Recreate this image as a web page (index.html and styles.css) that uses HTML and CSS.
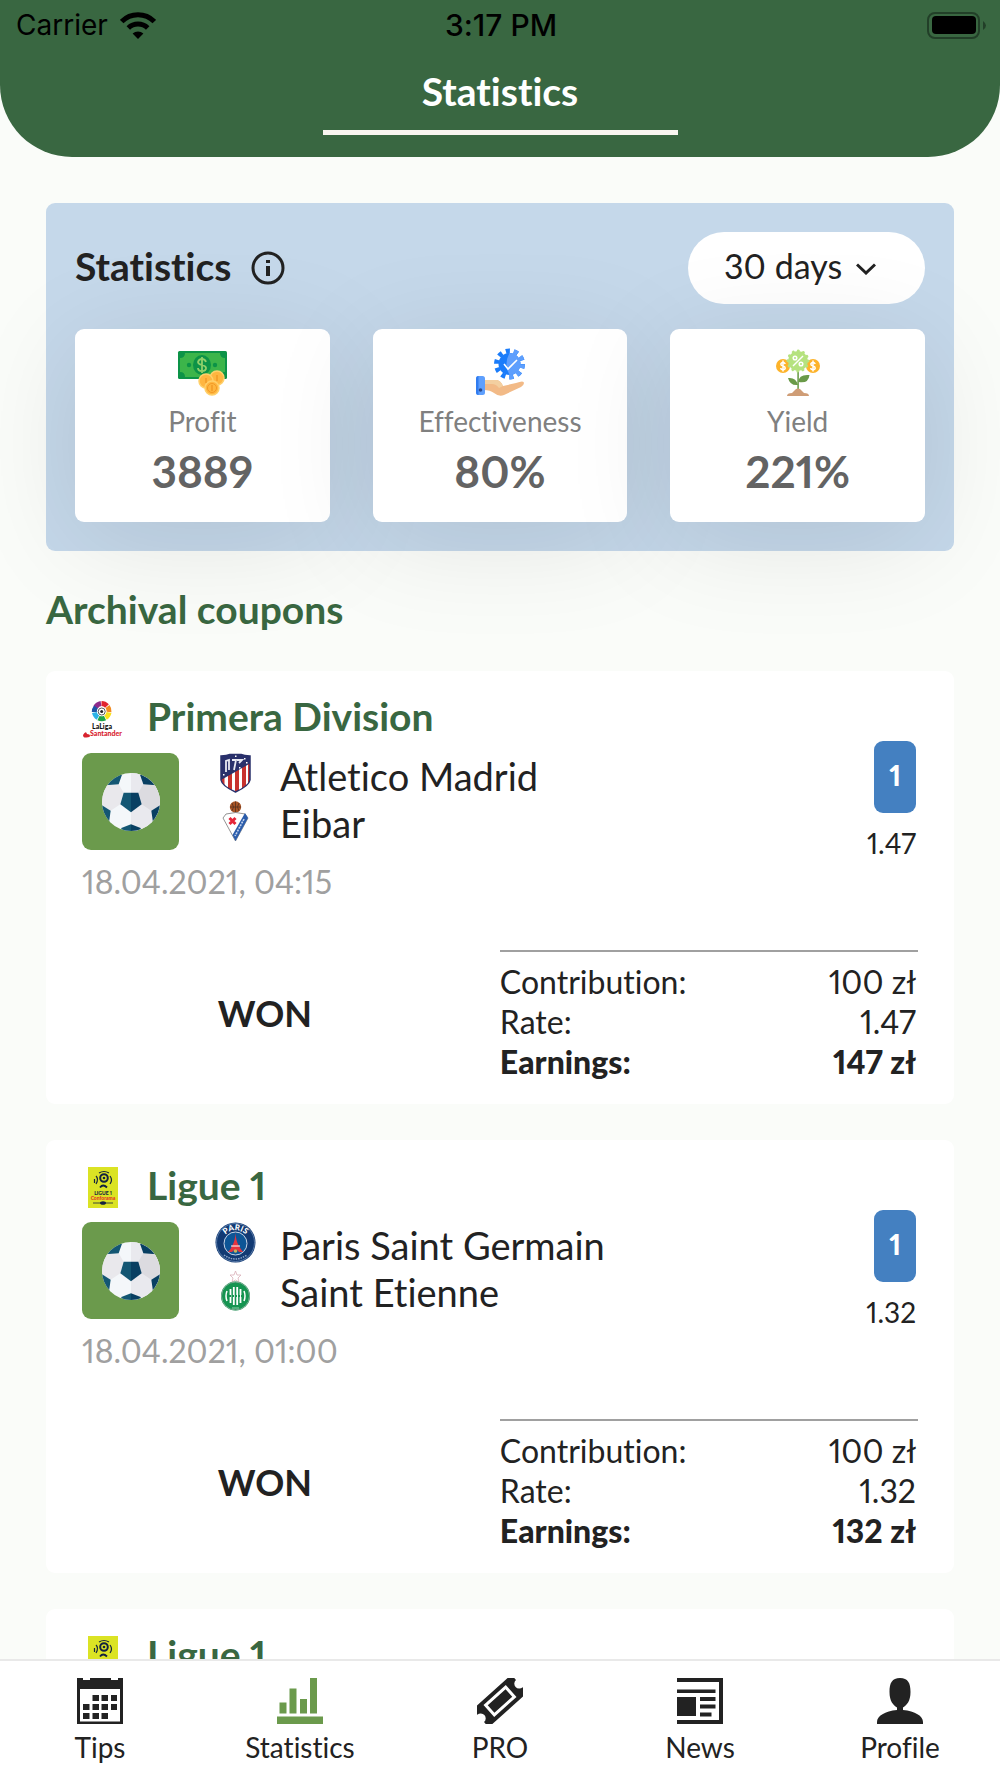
FILE: index.html
```html
<!DOCTYPE html>
<html lang="en">
<head>
    <meta charset="UTF-8">
    <meta name="viewport" content="width=device-width, initial-scale=1.0">
    <title>Statistics</title>
    <link rel="stylesheet" href="styles.css">
</head>
<body>

    <!-- Shared artwork -->
    <svg class="sprite" aria-hidden="true">
        <symbol id="ball" viewBox="0 0 174 174">
            <clipPath id="ball-clip"><circle cx="87" cy="87" r="87"/></clipPath>
            <g clip-path="url(#ball-clip)">
                <rect width="174" height="174" fill="#f4f7fa"/>
                <path d="M87 0h87v174H87z" fill="#e9e9ee"/>
                <path d="M50 34 65 59 55 94 26 113 0 97V30z" fill="#e9e8ec"/>
                <path d="M124 34 109 59 119 94 148 113 174 97V30z" fill="#dcdbe0"/>
                <path d="M65 59H87V118L55 94z" fill="#135673"/>
                <path d="M87 59h22l10 35-32 24z" fill="#083f62"/>
                <path d="M10 37 50 34 60 5 30 0z" fill="#135673"/>
                <path d="M164 37 124 34 114 5 144 0z" fill="#083f62"/>
                <path d="M0 97 26 113 20 155 0 150z" fill="#135673"/>
                <path d="M174 97 148 113 154 155 174 150z" fill="#083f62"/>
                <path d="M87 154 58 165V174H87z" fill="#135673"/>
                <path d="M87 154 116 165V174H87z" fill="#083f62"/>
            </g>
        </symbol>
    </svg>

    <div class="app">

        <header class="app-header">
            <div class="status-bar">
                <div class="status-left">
                    <span>Carrier</span>
                    <svg class="wifi" viewBox="0 0 36 27" aria-hidden="true">
                        <path d="M1.7 9.6a23 23 0 0 1 32.6 0" fill="none" stroke="#000" stroke-width="5"/>
                        <path d="M8.3 16a14 14 0 0 1 19.4 0" fill="none" stroke="#000" stroke-width="5"/>
                        <path d="M18 27l-5.4-5.5a8 8 0 0 1 10.8 0z"/>
                    </svg>
                </div>
                <span class="status-time">3:17 PM</span>
                <div class="status-right">
                    <svg class="battery" viewBox="0 0 59 27" aria-hidden="true">
                        <rect x="1" y="1" width="51" height="25" rx="7" fill="none" stroke="#223f28" stroke-width="2"/>
                        <rect x="5" y="4" width="44" height="18" rx="4"/>
                        <path d="M56 9q6 4.500 0 9z" fill="#223f28"/>
                    </svg>
                </div>
            </div>
            <h1 class="app-title">Statistics</h1>
        </header>

        <main class="app-main">

            <section class="stats-panel">
                <div class="stats-head">
                    <h2 class="stats-title">Statistics</h2>
                    <button class="info-btn" aria-label="About statistics">
                        <svg viewBox="0 0 34 34" aria-hidden="true">
                            <circle cx="17" cy="17" r="15" fill="none" stroke="#222" stroke-width="3"/>
                            <path d="M15 9h4v3h-4zM15 15h4v10h-4z" fill="#222"/>
                        </svg>
                    </button>
                    <div class="period">
                        <select class="period-select" aria-label="Period">
                            <option>30 days</option>
                        </select>
                        <svg class="period-arrow" viewBox="0 0 20 12" aria-hidden="true">
                            <path d="M1 1.500 10 10 19 1.500" fill="none" stroke="#222" stroke-width="3"/>
                        </svg>
                    </div>
                </div>

                <div class="stats-cards">
                    <div class="stat-card">
                        <svg class="stat-icon" viewBox="0 0 50 50" aria-hidden="true">
                            <rect x="1" y="4" width="49" height="28" rx="1.500" fill="#0c9347"/>
                            <path d="M8 6h35q0 5 5 5v14q-5 0-5 5H8q0-5-5-5V11q5 0 5-5z" fill="#3cb54a"/>
                            <circle cx="12" cy="18" r="2.200" fill="#0c9347"/>
                            <circle cx="38" cy="18" r="2.200" fill="#0c9347"/>
                            <ellipse cx="25" cy="18" rx="9" ry="10" fill="#0c9347"/>
                            <path d="M29 15q-1-3-4-3t-4 3q0 2 4 3t4 3q0 3-4 3t-4-3M25 10v16" fill="none" stroke="#8fd06a" stroke-width="1.800"/>
                            <g fill="#ffb640" stroke="#ffd06b" stroke-width="1.500">
                                <circle cx="40" cy="31" r="7"/>
                                <circle cx="29" cy="34" r="7"/>
                                <circle cx="35" cy="41" r="7"/>
                            </g>
                            <g fill="none" stroke="#f29a26" stroke-width="1.500">
                                <path d="M40 28v6M29 31v5M35 38v6"/>
                                <circle cx="35" cy="41" r="4.500" stroke-width="1"/>
                            </g>
                        </svg>
                        <span class="stat-label">Profit</span>
                        <span class="stat-value">3889</span>
                    </div>
                    <div class="stat-card">
                        <svg class="stat-icon" viewBox="0 0 50 50" aria-hidden="true">
                            <circle cx="34.500" cy="17" r="13" fill="none" stroke="#1a7cfa" stroke-width="5" stroke-dasharray="4.100 4.068"/>
                            <circle cx="34.500" cy="17" r="11" fill="#1a7cfa"/>
                            <path d="M34.500 6a11 11 0 0 1 0 22q-6-11 0-22z" fill="#5e9ffd"/>
                            <path d="M34.500 4a13 13 0 0 1 0 26" fill="none" stroke="#5e9ffd" stroke-width="5" stroke-dasharray="4.100 4.068" stroke-dashoffset="4"/>
                            <path d="M29 17l4 5 9-9" fill="none" stroke="#fff" stroke-width="1.600"/>
                            <path d="M9 33h13q4 1 6 6l13-3q8-3 8 0 0 2-3 4l-17 8q-5 2-10-2-4-3-10-3z" fill="#f2ba87"/>
                            <path d="M9 33h13q4 1 6 6l-4 2q-3-4-7-4H9z" fill="#f3cfa0"/>
                            <rect x="1" y="29" width="9" height="19" rx="2.500" fill="#5e9ffd"/>
                            <path d="M3.500 29Q1 29 1 32v13q0 3 2.500 3z" fill="#307cf0"/>
                            <circle cx="5.500" cy="43" r="1.800" fill="#2b4a8d"/>
                        </svg>
                        <span class="stat-label">Effectiveness</span>
                        <span class="stat-value">80%</span>
                    </div>
                    <div class="stat-card">
                        <svg class="stat-icon" viewBox="0 0 50 50" aria-hidden="true">
                            <circle cx="10" cy="19" r="7" fill="#fdb32a"/>
                            <circle cx="40" cy="19" r="7" fill="#fdb32a"/>
                            <path id="coin-sign" d="M12.200 17q-.5-1.600-2.200-1.600T7.800 17q0 1.500 2.200 2t2.200 2q0 1.600-2.200 1.600T7.800 21M10 13.500v11" fill="none" stroke="#fff" stroke-width="1.500"/>
                            <use href="#coin-sign" x="30"/>
                            <path d="M24.300 24h1.600v18h-1.600z" fill="#6e9f4e"/>
                            <circle cx="25" cy="14" r="10" fill="#b5e27f"/>
                            <circle cx="25" cy="14" r="10" fill="none" stroke="#b5e27f" stroke-width="3" stroke-linecap="round" stroke-dasharray=".1 5.136"/>
                            <path d="M30 9 20 19" stroke="#fff" stroke-width="1.500"/>
                            <circle cx="22" cy="11" r="1.800" fill="none" stroke="#fff" stroke-width="1.500"/>
                            <circle cx="28" cy="17" r="1.800" fill="none" stroke="#fff" stroke-width="1.500"/>
                            <path d="M25 38q-8 1-10-7 8-1 10 7zM25.500 35q0-8 11-7-1 9-11 7z" fill="#6a9a48"/>
                            <path d="M14 49q0-3 5-3l4-4q2-1 4 0l4 4q5 0 5 3z" fill="#cf9d76"/>
                        </svg>
                        <span class="stat-label">Yield</span>
                        <span class="stat-value">221%</span>
                    </div>
                </div>
            </section>

            <h2 class="section-title">Archival coupons</h2>

            <article class="coupon">
                <div class="coupon-top">
                    <div class="coupon-info">
                        <div class="league">
                            <svg class="logo" viewBox="0 0 41 41" aria-hidden="true">
                                <g fill="none" stroke-width="5">
                                    <path d="M13.500 6.500A7.500 7.500 0 0 1 19 2.500" stroke="#8e2a8b" transform="translate(0 3)"/>
                                    <path d="M19.500 5.500a7.500 7.500 0 0 1 5.500 2.500" stroke="#e2232e"/>
                                    <path d="M25.500 8.500a7.500 7.500 0 0 1 1.500 5.500" stroke="#f18a20"/>
                                    <path d="M27 14.500a7.500 7.500 0 0 1-3.500 5" stroke="#f9e21c"/>
                                    <path d="M23 20a7.500 7.500 0 0 1-6.500 0" stroke="#1fa54a"/>
                                    <path d="M16 19.500a7.500 7.500 0 0 1-3.500-5" stroke="#2bb3e8"/>
                                    <path d="M12.300 14a7.500 7.500 0 0 1 1.700-5" stroke="#1c54a5"/>
                                </g>
                                <circle cx="19.700" cy="13.500" r="4.500" fill="#fff"/>
                                <circle cx="19.700" cy="13.500" r="3.500" fill="none" stroke="#333" stroke-width=".8"/>
                                <circle cx="19.700" cy="13.500" r="1.500" fill="#222"/>
                                <text x="20" y="31" text-anchor="middle" class="logo-text" font-size="7" fill="#111">LaLiga</text>
                                <path d="M1 37q3-5 4-1 3 0 3 2 0 1-3.500 1.500T1 37z" fill="#d8232f"/>
                                <text x="24" y="38" text-anchor="middle" class="logo-text" font-size="7" fill="#d8232f">Santander</text>
                            </svg>
                            <h3 class="league-name">Primera Division</h3>
                        </div>
                        <div class="match">
                            <div class="sport"><svg class="sport-icon" aria-label="Football"><use href="#ball"/></svg></div>
                            <div class="team-logos">
                                <svg class="logo" viewBox="0 0 41 41" aria-hidden="true">
                                    <clipPath id="atm"><path d="M6 3q6 0 9-1.500h11Q29 3 35 3v24q-1 6-14.500 12Q7 33 6 27z"/></clipPath>
                                    <g clip-path="url(#atm)">
                                        <path d="M0 0h41v41H0z" fill="#fff"/>
                                        <path d="M6 0h3.500v41H6zM13 0h4v41h-4zM20 0h4v41h-4zM27 0h4v41h-4zM33 0h3v41h-3z" fill="#c8322f"/>
                                        <path d="M6 0h30v10L6 27z" fill="#29306b"/>
                                    </g>
                                    <path d="M6 3q6 0 9-1.500h11Q29 3 35 3v24q-1 6-14.500 12Q7 33 6 27z" fill="none" stroke="#29306b" stroke-width="1.500"/>
                                    <path d="M11 19V8l3-1v10M17 7h4l-2 10M22 7h5l-3 3" fill="none" stroke="#e8e9f2" stroke-width="1.800"/>
                                    <path d="M20 2.500h1.500V4H20zM29 5h1.500v1.500H29zM31 9h1.500v1.500H31zM8 21h1.500v1.500H8zM24 14h1.500v1.500H24z" fill="#fff"/>
                                </svg>
                                <svg class="logo" viewBox="0 0 41 41" aria-hidden="true">
                                    <circle cx="20.500" cy="6" r="5.700" fill="#a95425"/>
                                    <path d="M15 6h11M20.500.500v11M17 2q3 4 0 8M24 2q-3 4 0 8" fill="none" stroke="#53301f" stroke-width=".8"/>
                                    <path d="M11 13q10-3 19 0l3 4L20.500 40 8 17z" fill="#fff" stroke="#777" stroke-width=".8"/>
                                    <path d="M30 12l3 5L20.500 40l-3-6z" fill="#2a5cab"/>
                                    <path d="M29 18 20 35" stroke="#c3d3ee" stroke-width="1.600" stroke-dasharray="2 1"/>
                                    <path d="M14.500 17l6 6m0-6l-6 6" stroke="#e5263a" stroke-width="3"/>
                                </svg>
                            </div>
                            <div class="team-names">
                                <span>Atletico Madrid</span>
                                <span>Eibar</span>
                            </div>
                        </div>
                        <time class="coupon-date" datetime="2021-04-18T04:15">18.04.2021, 04:15</time>
                    </div>
                    <div class="odds">
                        <span class="odds-pick">1</span>
                        <span class="odds-rate">1.47</span>
                    </div>
                </div>
                <div class="coupon-summary">
                    <strong class="result">WON</strong>
                    <dl class="totals">
                        <div><dt>Contribution:</dt><dd>100 zł</dd></div>
                        <div><dt>Rate:</dt><dd>1.47</dd></div>
                        <div class="earnings"><dt>Earnings:</dt><dd>147 zł</dd></div>
                    </dl>
                </div>
            </article>

            <article class="coupon">
                <div class="coupon-top">
                    <div class="coupon-info">
                        <div class="league">
                            <svg class="logo" viewBox="0 0 41 41" aria-hidden="true">
                                <g id="ligue1">
                                    <path d="M6 0h30v41H6z" fill="#dbe324"/>
                                    <g fill="none" stroke="#14233f">
                                        <circle cx="22" cy="11" r="3.800" stroke-width="2"/>
                                        <path d="M14 9q3 3 0 8M12.500 12v4M28 9q3 4 0 8M17 6q5-3 10 0" stroke-width="1.200"/>
                                        <path d="M18 20.500q3-4 7 0" stroke-width="1.800"/>
                                        <path d="M11 36h20" stroke-width=".8"/>
                                    </g>
                                    <circle cx="22" cy="11" r="1.300" fill="#14233f"/>
                                    <ellipse cx="21" cy="36" rx="3" ry="1.800" fill="#14233f"/>
                                    <text x="21" y="28" text-anchor="middle" class="logo-text" font-size="5" fill="#14233f">LIGUE 1</text>
                                    <text x="21" y="32.500" text-anchor="middle" class="logo-text" font-size="5" fill="#e5352b">Conforama</text>
                                </g>
                            </svg>
                            <h3 class="league-name">Ligue 1</h3>
                        </div>
                        <div class="match">
                            <div class="sport"><svg class="sport-icon" aria-label="Football"><use href="#ball"/></svg></div>
                            <div class="team-logos">
                                <svg class="logo" viewBox="0 0 41 41" aria-hidden="true">
                                    <circle cx="20.500" cy="20.500" r="20" fill="#123a73"/>
                                    <circle cx="20.500" cy="20.500" r="19" fill="none" stroke="#6d8cb5" stroke-width=".8"/>
                                    <circle cx="20.500" cy="21.500" r="11.500" fill="#0d5596" stroke="#c7d4e6" stroke-width="1"/>
                                    <path id="psg-arc" d="M8 16a14 14 0 0 1 25 0" fill="none"/>
                                    <text class="logo-text" font-size="8" fill="#fff" text-anchor="middle"><textPath href="#psg-arc" startOffset="50%">PARIS</textPath></text>
                                    <path d="M20.500 11q.5 8 3 12 2 4 4.500 7h-4q-3-5-7 0h-4q3-3 4.500-7 2.500-4 3-12z" fill="#e3343f"/>
                                    <path d="M16 24h9" stroke="#fff" stroke-width="1"/>
                                    <circle cx="20.500" cy="29" r="1.800" fill="#c9b25b"/>
                                    <path d="M9 33q11 8 23 0" fill="none" stroke="#8fa8cb" stroke-width="1.500" stroke-dasharray="1.500 1"/>
                                </svg>
                                <svg class="logo" viewBox="0 0 41 41" aria-hidden="true">
                                    <path d="M20.500 1l1.500 4h4l-3 3 1 4-3.500-2-3.500 2 1-4-3-3h4z" fill="#fff" stroke="#d9aeb8" stroke-width=".8"/>
                                    <circle cx="20.500" cy="26" r="14.500" fill="#159451"/>
                                    <circle cx="20.500" cy="26" r="14" fill="none" stroke="#7cab93" stroke-width="1"/>
                                    <path d="M15.500 19v14M18.800 17v18M22.200 17v18M25.500 19v14" stroke="#fff" stroke-width="1.800"/>
                                    <path d="M12 21q-2 5 0 10M29 21q2 5 0 10" fill="none" stroke="#fff" stroke-width="1.500"/>
                                    <path d="M14 26h13" stroke="#159451" stroke-width="2" stroke-dasharray="2 1"/>
                                    <path d="M17 38h7" stroke="#8fd0ab" stroke-width="1"/>
                                </svg>
                            </div>
                            <div class="team-names">
                                <span>Paris Saint Germain</span>
                                <span>Saint Etienne</span>
                            </div>
                        </div>
                        <time class="coupon-date" datetime="2021-04-18T01:00">18.04.2021, 01:00</time>
                    </div>
                    <div class="odds">
                        <span class="odds-pick">1</span>
                        <span class="odds-rate">1.32</span>
                    </div>
                </div>
                <div class="coupon-summary">
                    <strong class="result">WON</strong>
                    <dl class="totals">
                        <div><dt>Contribution:</dt><dd>100 zł</dd></div>
                        <div><dt>Rate:</dt><dd>1.32</dd></div>
                        <div class="earnings"><dt>Earnings:</dt><dd>132 zł</dd></div>
                    </dl>
                </div>
            </article>

            <article class="coupon">
                <div class="league">
                    <svg class="logo" viewBox="0 0 41 41" aria-hidden="true"><use href="#ligue1"/></svg>
                    <h3 class="league-name">Ligue 1</h3>
                </div>
            </article>

        </main>

        <nav class="tab-bar">
            <a class="tab" href="#tips">
                <svg class="tab-icon" viewBox="0 0 46 46" aria-hidden="true">
                    <path fill-rule="evenodd" d="M0 0h6v2h7V0h21v2h7V0h5v46H0zM3 11v32.500h40V11z"/>
                    <path d="M15.500 17H22v6h-6.500zM24.500 17H31v6h-6.500zM34 17h6v6h-6zM6 26h6.500v6H6zM15.500 26H22v6h-6.500zM24.500 26H31v6h-6.500zM34 26h6v6h-6zM6 35h6.500v6H6zM15.500 35H22v6h-6.500zM24.500 35H31v6h-6.500z"/>
                </svg>
                <span>Tips</span>
            </a>
            <a class="tab tab-active" href="#statistics" aria-current="page">
                <svg class="tab-icon" viewBox="0 0 46 46" aria-hidden="true">
                    <path d="M2.500 24.500h7v11h-7zM12.500 10.500h7v25h-7zM23 21h7v14.500h-7zM33 0h7v35.500h-7zM0 38.500h46V46H0z"/>
                </svg>
                <span>Statistics</span>
            </a>
            <a class="tab" href="#pro">
                <svg class="tab-icon" viewBox="0 0 46 46" aria-hidden="true">
                    <g transform="rotate(-42 23 23)">
                        <path d="M-3 13Q-3 11 -1 11H47Q49 11 49 13V18a5 5 0 0 0 0 10V33Q49 35 47 35H-1Q-3 35-3 33V28a5 5 0 0 0 0-10z"/>
                        <path d="M9.500 16.500H36.500V29.500H9.500z" fill="none" stroke="#fff" stroke-width="3"/>
                    </g>
                </svg>
                <span>PRO</span>
            </a>
            <a class="tab" href="#news">
                <svg class="tab-icon" viewBox="0 0 46 46" aria-hidden="true">
                    <path d="M0 0h46v46H0v-4h42V4H0z"/>
                    <path d="M0 11.500h38.500V15H0zM0 19h19v19H0zM23 19h15.500v4H23zM23 26.500h15.500v4H23zM23 34.500h11.500v4H23z"/>
                </svg>
                <span>News</span>
            </a>
            <a class="tab" href="#profile">
                <svg class="tab-icon" viewBox="0 0 46 46" aria-hidden="true">
                    <path d="M23 0c8 0 10.500 5 10.500 14S30 27 26 29.500V32c12 1 20 6 20 12v2H0v-2c0-6 8-11 20-12v-2.500C16 27 12.500 23 12.500 14S15 0 23 0z"/>
                </svg>
                <span>Profile</span>
            </a>
        </nav>

    </div>

</body>
</html>
```
FILE: styles.css
```css
:root {
    --green-dark: #396741;
    --green: #6b9a4c;
    --blue: #4480c1;
    --panel: #c5d8ea;
    --page: #fafcf9;
    --surface: #ffffff;
    --text: #222222;
    --text-grey: #808080;
    --text-light: #a0a0a0;
}

* {
    margin: 0;
    padding: 0;
    box-sizing: border-box;
}

body {
    background-color: var(--page);
    color: var(--text);
    font-family: 'Lato', sans-serif;
    font-size: 32px;
    font-variant-ligatures: none;
    font-variant-numeric: proportional-nums;
    line-height: 40px;
}

button, select {
    font: inherit;
    color: inherit;
    border: none;
    background: none;
}

svg {
    display: block;
}

.sprite {
    position: absolute;
    width: 0;
    height: 0;
}

.app {
    display: flex;
    flex-direction: column;
    height: 100vh;
}

/* Header */
.app-header {
    flex-shrink: 0;
    padding-bottom: 22px;
    background-color: var(--green-dark);
    border-radius: 0 0 72px 72px;
}

.status-bar {
    display: grid;
    grid-template-columns: 1fr auto 1fr;
    align-items: center;
    height: 50px;
    padding: 0 14px 0 16px;
    color: #000000;
    font-family: 'Inter', sans-serif;
    font-size: 28px;
}

.status-left {
    display: flex;
    align-items: center;
    gap: 12px;
}

.status-time {
    font-size: 30px;
    font-weight: 500;
}

.status-right {
    display: flex;
    justify-content: flex-end;
}

.wifi {
    width: 36px;
    height: 27px;
}

.battery {
    width: 59px;
    height: 27px;
}

.app-title {
    width: 355px;
    margin: 0 auto;
    padding: 20px 0 18px;
    border-bottom: 5px solid #f9f6f0;
    color: #ffffff;
    font-size: 39px;
    line-height: 42px;
    text-align: center;
}

/* Scrolling content */
.app-main {
    flex: 1;
    min-height: 0;
    padding: 46px 46px 36px;
    overflow-y: auto;
    scrollbar-width: none;
}

.stats-panel {
    padding: 29px;
    border-radius: 9px;
    background-color: var(--panel);
}

.stats-head {
    display: flex;
    align-items: center;
    margin-bottom: 25px;
}

.stats-title {
    padding-bottom: 4px;
    font-size: 39px;
}

.info-btn {
    width: 34px;
    height: 34px;
    margin-left: 20px;
    cursor: pointer;
}

.period {
    position: relative;
    width: 237px;
    margin-left: auto;
}

.period-select {
    width: 100%;
    height: 72px;
    padding: 0 36px 4px;
    border-radius: 36px;
    background-color: var(--surface);
    font-size: 34px;
    appearance: none;
    cursor: pointer;
}

.period-arrow {
    position: absolute;
    top: 31px;
    right: 49px;
    width: 20px;
    height: 12px;
    pointer-events: none;
}

/* Relative so the card shadows also fall on the period picker */
.stats-cards {
    position: relative;
    display: grid;
    grid-template-columns: repeat(3, 1fr);
    gap: 43px;
}

.stat-card {
    display: flex;
    flex-direction: column;
    align-items: center;
    padding: 18px 12px 27px;
    border-radius: 9px;
    background-color: var(--surface);
    box-shadow: 0 18px 110px rgba(0, 0, 0, 0.1);
}

.stat-icon {
    width: 50px;
    height: 50px;
}

.stat-label {
    margin-top: 4px;
    color: var(--text-grey);
    font-size: 28px;
}

.stat-value {
    margin-top: 6px;
    color: #636363;
    font-size: 44px;
    font-weight: 700;
    line-height: 48px;
}

.section-title {
    margin: 38px 0 42px;
    color: var(--green-dark);
    font-size: 39px;
}

/* Coupons */
.coupon {
    margin-bottom: 36px;
    padding: 27px 36px 22px;
    border-radius: 9px;
    background-color: var(--surface);
}

.coupon-top {
    display: flex;
    justify-content: space-between;
}

.league {
    display: flex;
    align-items: flex-start;
    gap: 24px;
}

.logo {
    width: 41px;
    height: 41px;
}

.logo-text {
    font-family: 'Lato', sans-serif;
    font-weight: 900;
}

.league-name {
    color: var(--green-dark);
    font-size: 39px;
    line-height: 36px;
}

.match {
    display: flex;
    margin-top: 14px;
}

.sport {
    display: flex;
    align-items: center;
    justify-content: center;
    width: 97px;
    height: 97px;
    border-radius: 9px;
    background-color: var(--green);
}

.sport-icon {
    width: 58px;
    height: 58px;
}

.team-logos {
    display: flex;
    flex-direction: column;
    gap: 7px;
    margin: 0 24px 0 36px;
}

.team-names {
    display: flex;
    flex-direction: column;
    font-size: 38px;
    line-height: 47px;
}

.coupon-date {
    display: block;
    margin-top: 12px;
    color: var(--text-light);
}

.odds {
    display: flex;
    flex-direction: column;
    align-items: flex-end;
    padding: 43px 2px 0 0;
    font-size: 28px;
}

.odds-pick {
    width: 42px;
    margin-bottom: 10px;
    padding-bottom: 4px;
    border-radius: 9px;
    background-color: var(--blue);
    color: #ffffff;
    font-weight: 900;
    line-height: 68px;
    text-align: center;
}

.coupon-summary {
    display: grid;
    grid-template-columns: 7fr 8fr;
    gap: 52px;
    align-items: center;
    margin-top: 48px;
}

.result {
    padding-bottom: 6px;
    font-size: 36px;
    text-align: center;
}

.totals {
    padding: 10px 2px 0 0;
    border-top: 2px solid var(--text-light);
}

.totals div {
    display: flex;
    justify-content: space-between;
}

.totals .earnings {
    font-weight: 900;
}

/* Bottom navigation */
.tab-bar {
    display: grid;
    grid-template-columns: repeat(5, 1fr);
    flex-shrink: 0;
    padding: 17px 0 11px;
    border-top: 2px solid #e9e9e9;
    background-color: var(--surface);
}

.tab {
    display: flex;
    flex-direction: column;
    align-items: center;
    gap: 3px;
    color: var(--text);
    font-size: 28px;
    text-decoration: none;
}

.tab-icon {
    width: 46px;
    height: 46px;
    fill: currentColor;
}

.tab-active .tab-icon {
    fill: var(--green);
}
```
